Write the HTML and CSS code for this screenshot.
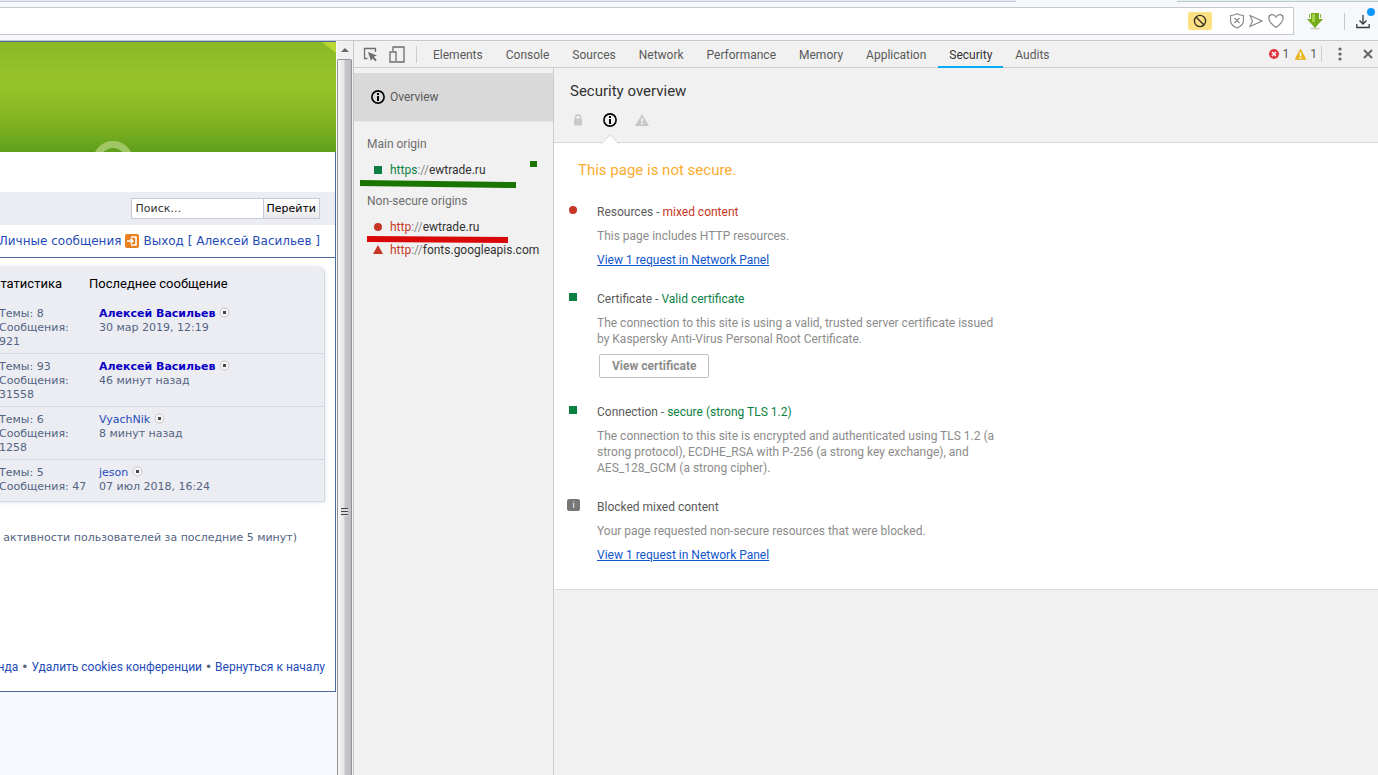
FILE: index.html
```html
<!DOCTYPE html>
<html lang="ru">
<head>
    <meta charset="UTF-8">
    <meta name="viewport" content="width=device-width, initial-scale=1.0">
    <title>ewtrade.ru</title>
    <link rel="stylesheet" href="styles.css">
</head>
<body>
    <!-- shared icons -->
    <svg class="sprite" aria-hidden="true">
        <symbol id="info" viewBox="0 0 14 14">
            <circle cx="7" cy="7" r="6.1" fill="none" stroke="#000" stroke-width="1.6"/>
            <path d="M6 3h2v2H6zM6 6h2v5H6z"/>
        </symbol>
        <symbol id="last-post" viewBox="0 0 11 11">
            <circle cx="5.5" cy="5.5" r="4.5" fill="#f8f8f8" stroke="#c4c4c4"/>
            <path d="M4 4h3v3H4z" fill="#444"/>
        </symbol>
    </svg>

    <header class="browser">
        <div class="tab-strip">
            <div class="tab-line"></div>
            <div class="tab-active"></div>
            <div class="tab-new"></div>
        </div>
        <div class="address-row">
            <div class="address-bar">
                <input type="text" class="address-input" aria-label="Address">
                <button class="blocked-badge" aria-label="Content blocked">
                    <svg width="14" height="14" viewBox="0 0 14 14" fill="none" stroke="#3b3524" stroke-width="1.4"><circle cx="7" cy="7" r="5.6"/><path d="M3 3l8 8"/></svg>
                </button>
                <div class="address-icons">
                    <button aria-label="Shield">
                        <svg width="14" height="16" viewBox="0 0 14 16" fill="none" stroke="#85888c" stroke-width="1.1"><path d="M.6 2.500Q4 2.500 7 .8Q10 2.500 13.400 2.500V9Q12.500 12.500 7 15Q1.500 12.500 .6 9zM4.500 5l5 5M9.500 5l-5 5"/></svg>
                    </button>
                    <button aria-label="Send">
                        <svg width="14" height="14" viewBox="0 0 14 14" fill="none" stroke="#85888c" stroke-width="1.1"><path d="M1 1.500l12 5.500L1 12.500L3.500 7z"/></svg>
                    </button>
                    <button aria-label="Favourite">
                        <svg width="16" height="16" viewBox="0 0 16 16" fill="none" stroke="#85888c" stroke-width="1.2"><path d="M8 14.500C4 11.500.8 8.500.8 5.200C.8 1 6 .3 8 4C10 .3 15.200 1 15.200 5.200C15.200 8.500 12 11.500 8 14.500z"/></svg>
                    </button>
                </div>
            </div>
            <button class="extension" aria-label="Extension">
                <svg width="16" height="17" viewBox="0 0 16 17"><ellipse cx="8" cy="15.5" rx="5" ry="1" fill="#ccd3c4"/><path d="M4 0h8v6h4L8 15L0 6h4z" fill="#76aa1e"/><path d="M2 1h1v4H2zM13 1h1v4h-1z" fill="#8fbf36"/><path d="M5 1h3v8H5z" fill="#a5d244"/></svg>
            </button>
            <button class="downloads" aria-label="Downloads">
                <svg width="14" height="15" viewBox="0 0 14 15" fill="none" stroke="#36393d" stroke-width="1.3"><path d="M7 1v9M3.500 6.500L7 10l3.500-3.500M.8 10v3.500h12.400V10"/></svg>
                <span class="download-dot"></span>
            </button>
        </div>
    </header>

    <div class="workspace">
        <div class="page-view">
            <div class="forum">
                <div class="banner">
                    <svg class="banner-corner" width="14" height="11" viewBox="0 0 14 11"><path d="M0 0h14v11z" fill="#b9d531"/></svg>
                    <svg class="banner-logo" width="38" height="11" viewBox="0 0 38 11"><circle cx="19" cy="20" r="16.5" fill="none" stroke="#a0c666" stroke-width="7"/></svg>
                </div>
                <div class="forum-body">
                    <form class="search-bar">
                        <input type="text" class="search-input" value="Поиск…" aria-label="Поиск">
                        <button type="button" class="search-btn">Перейти</button>
                    </form>
                    <nav class="user-links">
                        <a href="#">Личные сообщения</a>
                        <svg width="14" height="14" viewBox="0 0 14 14"><rect width="14" height="14" rx="2" fill="#ea8020"/><path d="M6 3h5v8H6" fill="none" stroke="#fff" stroke-width="1.6"/><path d="M2 7h5M5.500 4.500L8 7L5.500 9.500" fill="none" stroke="#fff" stroke-width="1.5"/></svg>
                        <a href="#">Выход [ Алексей Васильев ]</a>
                    </nav>
                    <table class="topics">
                        <thead>
                            <tr><th class="stats">Статистика</th><th>Последнее сообщение</th></tr>
                        </thead>
                        <tbody>
                            <tr>
                                <td class="stats">Темы: 8<br>Сообщения:<br>921</td>
                                <td><a href="#" class="admin">Алексей Васильев</a> <svg class="post-icon"><use href="#last-post"/></svg><br>30 мар 2019, 12:19</td>
                            </tr>
                            <tr>
                                <td class="stats">Темы: 93<br>Сообщения:<br>31558</td>
                                <td><a href="#" class="admin">Алексей Васильев</a> <svg class="post-icon"><use href="#last-post"/></svg><br>46 минут назад</td>
                            </tr>
                            <tr>
                                <td class="stats">Темы: 6<br>Сообщения:<br>1258</td>
                                <td><a href="#">VyachNik</a> <svg class="post-icon"><use href="#last-post"/></svg><br>8 минут назад</td>
                            </tr>
                            <tr>
                                <td class="stats">Темы: 5<br>Сообщения: 47</td>
                                <td><a href="#">jeson</a> <svg class="post-icon"><use href="#last-post"/></svg><br>07 июл 2018, 16:24</td>
                            </tr>
                        </tbody>
                    </table>
                    <p class="activity">а активности пользователей за последние 5 минут)</p>
                    <div class="forum-footer">
                        <a href="#">Команда</a><i>•</i><a href="#">Удалить cookies конференции</a><i>•</i><a href="#">Вернуться к началу</a>
                    </div>
                </div>
            </div>
        </div>
        <div class="scrollbar">
            <div class="scroll-up"><svg width="8" height="4" viewBox="0 0 8 4"><path d="M0 4l4-4l4 4z" fill="#666"/></svg></div>
            <div class="scroll-thumb"><div class="grip"></div></div>
        </div>

        <div class="devtools" lang="en">
            <div class="toolbar">
                <button class="tool inspect" aria-label="Inspect">
                    <svg width="15" height="15" viewBox="0 0 15 15"><path d="M4.500 11.500H1.500V1.500h11v3.500" fill="none" stroke="#6e6e6e" stroke-width="1.3"/><path d="M5 5l9 3.500l-3.300 1.300l3 3l-1.400 1.400l-3-3L8 14z" fill="#6e6e6e"/></svg>
                </button>
                <button class="tool device" aria-label="Device toolbar">
                    <svg width="16" height="17" viewBox="0 0 16 17" fill="none" stroke="#6e6e6e" stroke-width="1.3"><path d="M4 5V1h11v15H8M1 6h6v10H1z"/></svg>
                </button>
                <nav class="tabs">
                    <button>Elements</button>
                    <button>Console</button>
                    <button>Sources</button>
                    <button>Network</button>
                    <button>Performance</button>
                    <button>Memory</button>
                    <button>Application</button>
                    <button class="active">Security</button>
                    <button>Audits</button>
                </nav>
                <div class="counters">
                    <svg width="10" height="10" viewBox="0 0 10 10"><circle cx="5" cy="5" r="5" fill="#e2373f"/><path d="M3 3l4 4M7 3L3 7" stroke="#fff" stroke-width="1.5"/></svg>
                    <span>1</span>
                    <svg class="warn" width="11" height="11" viewBox="0 0 10 10"><path d="M5 0l5 9.500H0z" fill="#efb61c" stroke="#dba410" stroke-width=".5"/><path d="M4.300 3h1.400v3.500H4.300zM4.300 7.300h1.400v1.300H4.300z" fill="#fff"/></svg>
                    <span>1</span>
                </div>
                <button class="tool menu" aria-label="Menu">
                    <svg width="4" height="14" viewBox="0 0 4 14" fill="#666"><circle cx="2" cy="2" r="1.6"/><circle cx="2" cy="7" r="1.6"/><circle cx="2" cy="12" r="1.6"/></svg>
                </button>
                <button class="tool close" aria-label="Close">
                    <svg width="10" height="10" viewBox="0 0 10 10" stroke="#666" stroke-width="2"><path d="M1 1l8 8M9 1L1 9"/></svg>
                </button>
            </div>

            <div class="panel">
                <aside class="sidebar">
                    <button class="overview"><svg width="14" height="14"><use href="#info"/></svg>Overview</button>
                    <h3>Main origin</h3>
                    <button class="origin secure"><i class="dot square"></i><span><b>https</b>://<em>ewtrade.ru</em></span></button>
                    <h3 class="nonsecure">Non-secure origins</h3>
                    <button class="origin"><i class="dot round"></i><span><b>http</b>://<em>ewtrade.ru</em></span></button>
                    <button class="origin"><i class="dot triangle"></i><span><b>http</b>://<em>fonts.googleapis.com</em></span></button>
                    <!-- marker strokes over the origin list -->
                    <svg class="marks" width="200" height="200" viewBox="0 0 200 200">
                        <path d="M6 112L162 114V120L6 118z" fill="#1a7400"/>
                        <path d="M176 93h7v6h-7z" fill="#1a7400"/>
                        <path d="M13 168L154 169V175L13 174z" fill="#d90808"/>
                    </svg>
                </aside>

                <main class="content">
                    <div class="content-header">
                        <h1>Security overview</h1>
                        <div class="status-icons">
                            <svg width="14" height="14" viewBox="0 0 14 14"><path d="M4.500 6V4.500a2.500 2.500 0 0 1 5 0V6" fill="none" stroke="#c8c8c8" stroke-width="1.3"/><rect x="3" y="5.5" width="8" height="7" rx="1" fill="#c8c8c8"/></svg>
                            <div class="current"><svg width="14" height="14"><use href="#info"/></svg></div>
                            <svg width="14" height="14" viewBox="0 0 14 14"><path d="M7 1l7 12H0z" fill="#c8c8c8"/><path d="M6.200 5.500h1.600v3H6.200zM6.200 9.800h1.600v1.500H6.200z" fill="#fff"/></svg>
                        </div>
                    </div>
                    <div class="explanations">
                        <h2>This page is not secure.</h2>
                        <section class="explanation">
                            <i class="dot round"></i>
                            <div>
                                <h4>Resources - <span class="bad">mixed content</span></h4>
                                <p>This page includes HTTP resources.</p>
                                <a href="#">View 1 request in Network Panel</a>
                            </div>
                        </section>
                        <section class="explanation">
                            <i class="dot square"></i>
                            <div>
                                <h4>Certificate - <span class="good">Valid certificate</span></h4>
                                <p>The connection to this site is using a valid, trusted server certificate issued by Kaspersky Anti-Virus Personal Root Certificate.</p>
                                <button class="cert-btn">View certificate</button>
                            </div>
                        </section>
                        <section class="explanation">
                            <i class="dot square"></i>
                            <div>
                                <h4>Connection - <span class="good">secure (strong TLS 1.2)</span></h4>
                                <p>The connection to this site is encrypted and authenticated using TLS 1.2 (a strong protocol), ECDHE_RSA with P-256 (a strong key exchange), and AES_128_GCM (a strong cipher).</p>
                            </div>
                        </section>
                        <section class="explanation">
                            <i class="info-box">i</i>
                            <div>
                                <h4>Blocked mixed content</h4>
                                <p>Your page requested non-secure resources that were blocked.</p>
                                <a href="#">View 1 request in Network Panel</a>
                            </div>
                        </section>
                    </div>
                </main>
            </div>
        </div>
    </div>
</body>
</html>
```
FILE: styles.css
```css
* {
    box-sizing: border-box;
}
body {
    margin: 0;
    height: 100vh;
    display: flex;
    flex-direction: column;
    overflow: hidden;
    font-family: Roboto, sans-serif;
    font-size: 12px;
    background-color: #f1f1f1;
}
button {
    background: none;
    border: none;
    padding: 0;
    font: inherit;
    color: inherit;
    cursor: pointer;
}
h1, h2, h3, h4, p {
    margin: 0;
    font-weight: normal;
}
svg {
    flex: none;
}
.sprite {
    position: absolute;
    width: 0;
    height: 0;
}

/* browser chrome */
.browser {
    flex: none;
    background-color: #f7f8fb;
    border-bottom: 1px solid #c6c9cc;
}
.tab-strip {
    display: flex;
    height: 2px;
}
.tab-line {
    flex: 1016;
    background-color: #e1e8f1;
    border-bottom: 1px solid #c0c8d0;
}
.tab-active {
    flex: 161;
}
.tab-new {
    flex: 201;
    background-color: #e2f0ee;
    border-bottom: 1px solid #c0c8d0;
}
.address-row {
    display: flex;
    align-items: center;
    padding: 5px 8px 5px 0;
}
.address-bar {
    flex: 1;
    display: flex;
    align-items: center;
    height: 28px;
    padding-right: 9px;
    background-color: #fff;
    border: 1px solid #c6c9cc;
    border-left: none;
}
.address-input {
    flex: 1;
    height: 24px;
    border: none;
    outline: none;
    background: none;
}
.blocked-badge {
    display: flex;
    align-items: center;
    justify-content: center;
    width: 24px;
    height: 18px;
    border-radius: 2px;
    background-color: #fce083;
}
.address-icons {
    display: flex;
    gap: 5px;
    margin-left: 18px;
}
.address-icons button, .extension, .downloads {
    display: flex;
    align-items: center;
}
.extension {
    margin: 0 21px 0 13px;
}
.downloads {
    position: relative;
    height: 17px;
    padding-left: 11px;
    border-left: 1px solid #c6c9cc;
}
.download-dot {
    position: absolute;
    top: -5px;
    right: -5px;
    width: 8px;
    height: 8px;
    border-radius: 50%;
    background-color: #0d99ff;
}

.workspace {
    flex: 1;
    display: flex;
    min-height: 0;
}

/* forum page */
.page-view {
    flex: 0 0 337px;
    display: flex;
    justify-content: flex-end;
    align-items: flex-start;
    padding-right: 1px;
    overflow: hidden;
    background-color: #f6f8fd;
    font-family: "DejaVu Sans", sans-serif;
    font-size: 11px;
    color: #536482;
}
.forum {
    flex: none;
    width: 344px;
    border-top: 1px solid #4b6a9f;
}
.forum a {
    color: #1f4cb8;
    text-decoration: none;
}
.banner {
    position: relative;
    height: 110px;
    background: linear-gradient(#8ab826, #95c329 30%, #93c128 45%, #7fb222 75%, #5f9f1b);
}
.banner-corner {
    position: absolute;
    top: 0;
    right: 0;
}
.banner-logo {
    position: absolute;
    bottom: 0;
    right: 204px;
}
.forum-body {
    padding-top: 40px;
    background-color: #fff;
    border-right: 1px solid #4b6a9f;
    border-bottom: 1px solid #4b6a9f;
}
.search-bar {
    display: flex;
    justify-content: flex-end;
    padding: 6px 15px;
    background-color: #ecedf3;
}
.search-input {
    width: 132px;
    height: 21px;
    padding: 0 4px;
    border: 1px solid #c7c9d9;
    border-right: none;
    background-color: #fff;
    color: #333;
    font: inherit;
}
.search-btn {
    height: 21px;
    padding: 0 3px;
    border: 1px solid #c7c9d9;
    background: linear-gradient(#fff, #e9e9e9);
    color: #000;
}
.user-links {
    display: flex;
    align-items: center;
    justify-content: flex-end;
    gap: 4px;
    height: 33px;
    padding-right: 15px;
    border-bottom: 1px solid #4b6a9f;
    font-size: 12px;
    white-space: nowrap;
}
.topics {
    width: calc(100% - 10px);
    margin-top: 9px;
    border-spacing: 0;
    background-color: #ecedf3;
    border-right: 1px solid #d3d9e2;
    border-bottom: 1px solid #d3d9e2;
    border-top-right-radius: 7px;
    box-shadow: 0 0 4px #dde0e8;
    line-height: 14px;
}
.topics th {
    height: 33px;
    padding: 0;
    text-align: left;
    font-family: Roboto, sans-serif;
    font-size: 13px;
    font-weight: normal;
    color: #000;
}
.topics td {
    padding: 6px 0 4px 10px;
    vertical-align: top;
    border-top: 1px solid #d3d9e2;
}
.topics tr:first-child td {
    border-top-color: transparent;
}
.topics tr:last-child td {
    padding-bottom: 7px;
}
.topics .stats {
    width: 97px;
    white-space: nowrap;
}
.topics td.stats {
    padding-left: 7px;
}
.topics .admin {
    color: #0b00c4;
    font-weight: bold;
}
.post-icon {
    width: 11px;
    height: 11px;
    vertical-align: -1px;
}
.activity {
    display: flex;
    justify-content: flex-end;
    margin-top: 29px;
    padding-right: 38px;
    line-height: 14px;
    white-space: nowrap;
}
.forum-footer {
    display: flex;
    justify-content: flex-end;
    gap: 3px;
    margin-top: 114px;
    padding: 0 10px 16px 0;
    font-family: Roboto, sans-serif;
    font-size: 12px;
    line-height: 16px;
    white-space: nowrap;
}
.forum-footer i {
    font-family: "DejaVu Sans", sans-serif;
    font-style: normal;
}

/* page scrollbar */
.scrollbar {
    flex: 0 0 17px;
    display: flex;
    flex-direction: column;
    background-color: #f0f0f0;
    border-right: 1px solid #c8c8c8;
}
.scroll-up {
    display: flex;
    align-items: center;
    justify-content: center;
    height: 18px;
}
.scroll-thumb {
    flex: 1;
    display: flex;
    align-items: center;
    justify-content: center;
    margin-right: 1px;
    padding-top: 188px;
    border: 1px solid #929296;
    border-bottom: none;
    border-radius: 2px 2px 0 0;
    background: linear-gradient(to right, #f6f6f6, #e6e6e8 45%, #c6c6ca 55%, #bcbcc2);
}
.grip {
    width: 7px;
    height: 8px;
    background: repeating-linear-gradient(#444 0 1px, #ddd 1px 3px);
}

/* devtools */
.devtools {
    flex: 1;
    min-width: 0;
    display: flex;
    flex-direction: column;
    color: #5a5a5a;
}
.toolbar {
    flex: none;
    display: flex;
    align-items: center;
    height: 27px;
    padding: 0 5px 0 9px;
    border-bottom: 1px solid #ccc;
}
.tool {
    display: flex;
    align-items: center;
}
.device {
    margin-left: 11px;
    padding-right: 11px;
    border-right: 1px solid #ccc;
}
.tabs {
    flex: 1;
    display: flex;
    gap: 1px;
    margin-left: 5px;
}
.tabs button {
    height: 27px;
    padding: 3px 11px 0;
    border-bottom: 2px solid transparent;
}
.tabs .active {
    border-bottom-color: #03a9f4;
    color: #333;
}
.counters {
    display: flex;
    align-items: center;
    gap: 4px;
    height: 16px;
    padding-right: 4px;
    border-right: 1px solid #ccc;
}
.counters .warn {
    margin-left: 2px;
}
.menu {
    margin: 0 21px 0 16px;
}
.panel {
    flex: 1;
    display: flex;
}
.sidebar {
    position: relative;
    flex: 0 0 200px;
    padding-top: 5px;
    border-right: 1px solid #ccc;
}
.overview {
    display: flex;
    align-items: center;
    gap: 5px;
    width: 100%;
    height: 49px;
    padding-left: 17px;
    background-color: #d9d9d9;
    border-bottom: 1px solid #e4e4e4;
}
.sidebar h3 {
    padding: 14px 0 6px 13px;
    font-size: 12px;
    line-height: 16px;
    color: #6e6e6e;
}
.sidebar .nonsecure {
    padding-top: 12px;
    padding-bottom: 6px;
}
.origin {
    display: flex;
    align-items: center;
    gap: 8px;
    height: 23px;
    padding-left: 20px;
    color: #888;
}
.origin b {
    font-weight: normal;
    color: #c63626;
}
.origin.secure b {
    color: #0b8043;
}
.origin em {
    font-style: normal;
    color: #333;
}
.dot {
    flex: none;
    width: 8px;
    height: 8px;
    background-color: #c63626;
}
.round {
    border-radius: 50%;
}
.square {
    background-color: #0b8043;
}
.triangle {
    width: 10px;
    height: 9px;
    margin: 0 -1px;
    clip-path: polygon(50% 0, 100% 100%, 0 100%);
}
.marks {
    position: absolute;
    top: 0;
    left: 0;
    pointer-events: none;
}

.content {
    flex: 1;
    min-width: 0;
}
.content-header {
    height: 75px;
    padding: 13px 16px 0;
    border-bottom: 1px solid #d9d9d9;
}
.content-header h1 {
    font-size: 15px;
    line-height: 20px;
    color: #333;
}
.status-icons {
    display: flex;
    gap: 18px;
    margin-top: 12px;
    padding-left: 1px;
}
.current {
    position: relative;
    height: 14px;
}
/* notch pointing at the selected state */
.current::after {
    content: "";
    position: absolute;
    top: 24px;
    left: 0;
    width: 12px;
    height: 12px;
    background-color: #fff;
    border: 1px solid #d9d9d9;
    transform: rotate(45deg);
    clip-path: polygon(0 0, 100% 0, 0 100%);
}
.explanations {
    padding: 17px 15px 26px;
    background-color: #fff;
    border-bottom: 1px solid #ddd;
}
.explanations h2 {
    padding-left: 9px;
    font-size: 15px;
    line-height: 20px;
    color: #fbac30;
}
.explanation {
    display: flex;
    gap: 20px;
    margin-top: 23px;
    line-height: 16px;
}
.explanation .dot {
    margin-top: 2px;
}
.explanation p {
    max-width: 400px;
    margin: 8px 0;
    color: #8c8c8c;
}
.explanation p:last-child {
    margin-bottom: 0;
}
.explanation a {
    display: block;
    width: fit-content;
    color: #1155cc;
}
.explanation h4 {
    font-size: 12px;
}
h2 + .explanation {
    margin-top: 24px;
}
.bad {
    color: #c63626;
}
.good {
    color: #0b8043;
}
.cert-btn {
    display: block;
    height: 24px;
    margin: -1px 0 3px 2px;
    padding: 0 12px;
    border: 1px solid #c0c0c0;
    border-radius: 2px;
    font-weight: bold;
    color: #8c8c8c;
}
.info-box {
    flex: none;
    width: 13px;
    height: 12px;
    margin: 0 -3px 0 -2px;
    border-radius: 2px;
    background-color: #777;
    color: #fff;
    font-style: normal;
    font-size: 9px;
    line-height: 12px;
    text-align: center;
}
```
